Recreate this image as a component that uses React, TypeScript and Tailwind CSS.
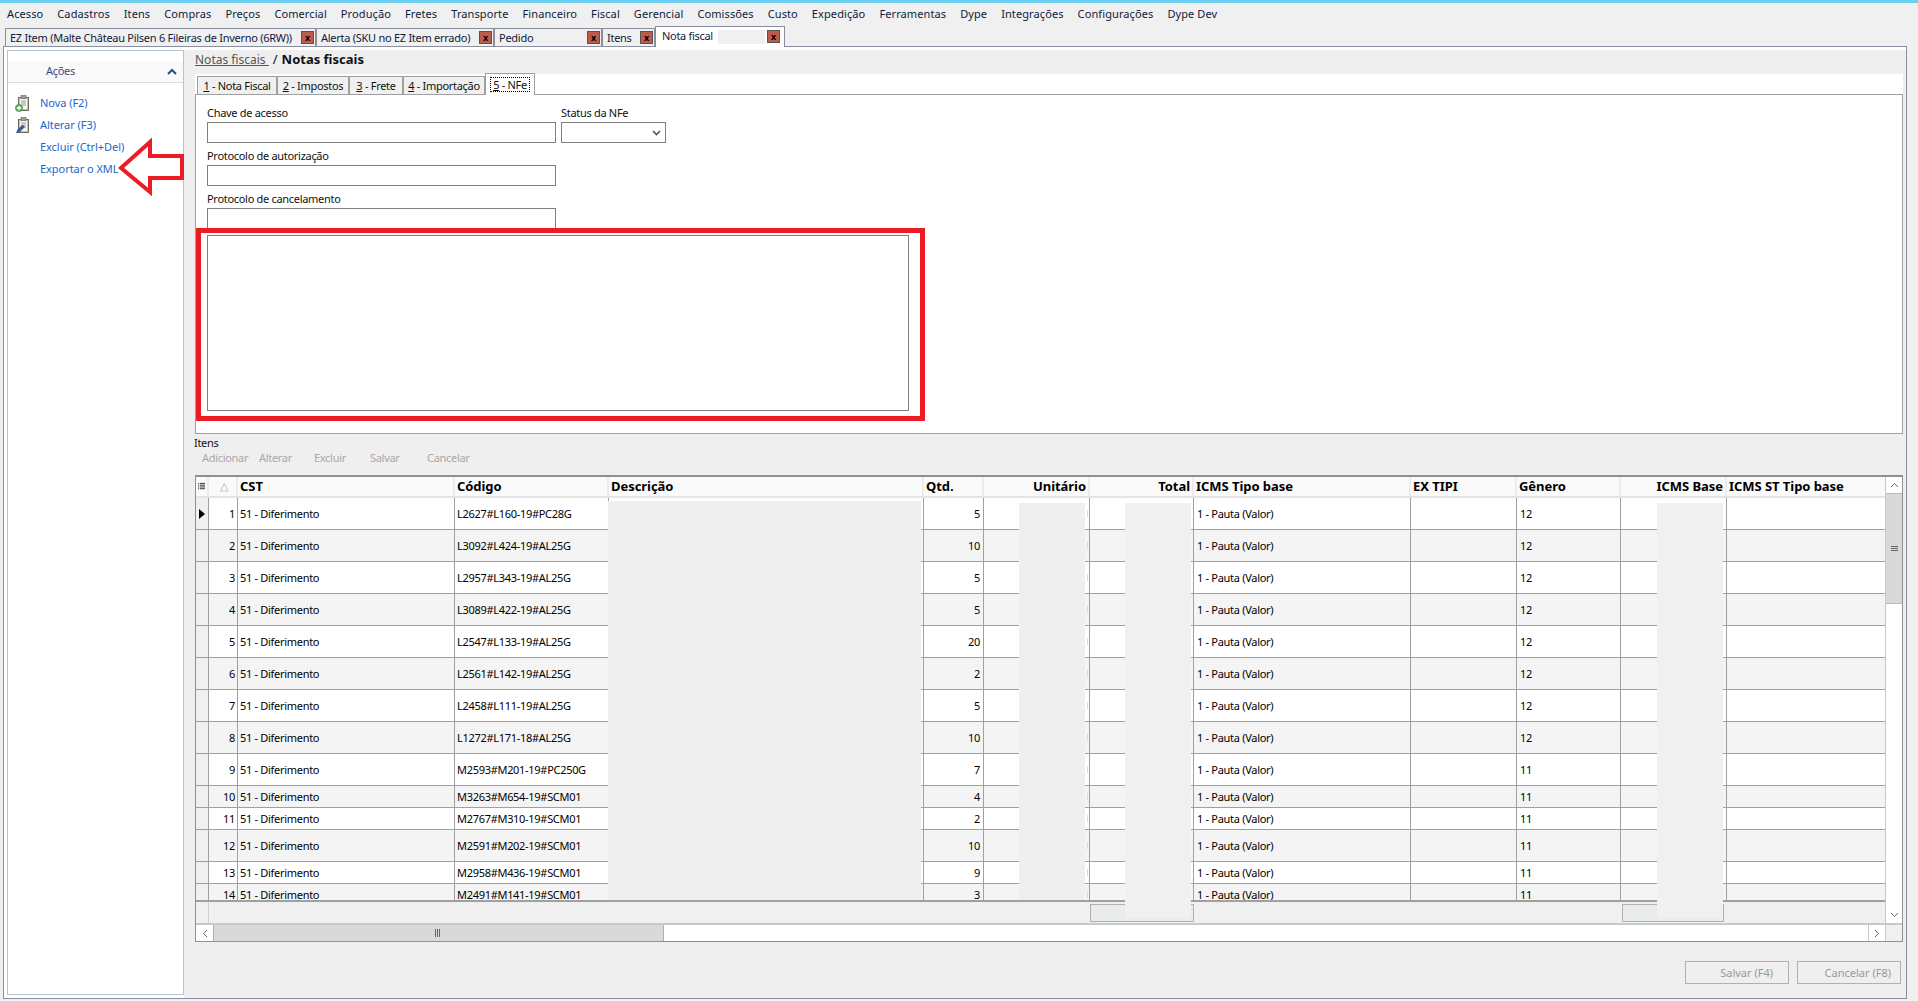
import React from "react";

const menus = ["Acesso","Cadastros","Itens","Compras","Preços","Comercial","Produção","Fretes","Transporte","Financeiro","Fiscal","Gerencial","Comissões","Custo","Expedição","Ferramentas","Dype","Integrações","Configurações","Dype Dev"];

const cols = [
  { t: "", w: 13 },
  { t: "△", w: 29 },
  { t: "CST", w: 217 },
  { t: "Código", w: 154 },
  { t: "Descrição", w: 315 },
  { t: "Qtd.", w: 60 },
  { t: "Unitário", w: 106, r: true },
  { t: "Total", w: 104, r: true },
  { t: "ICMS Tipo base", w: 217 },
  { t: "EX TIPI", w: 106 },
  { t: "Gênero", w: 104 },
  { t: "ICMS Base", w: 106, r: true },
  { t: "ICMS ST Tipo base", w: 160 },
];

const rows = [
  ["L2627#L160-19#PC28G", 5, 12, 32],
  ["L3092#L424-19#AL25G", 10, 12, 32],
  ["L2957#L343-19#AL25G", 5, 12, 32],
  ["L3089#L422-19#AL25G", 5, 12, 32],
  ["L2547#L133-19#AL25G", 20, 12, 32],
  ["L2561#L142-19#AL25G", 2, 12, 32],
  ["L2458#L111-19#AL25G", 5, 12, 32],
  ["L1272#L171-18#AL25G", 10, 12, 32],
  ["M2593#M201-19#PC250G", 7, 11, 32],
  ["M3263#M654-19#SCM01", 4, 11, 22],
  ["M2767#M310-19#SCM01", 2, 11, 22],
  ["M2591#M202-19#SCM01", 10, 11, 32],
  ["M2958#M436-19#SCM01", 9, 11, 22],
  ["M2491#M141-19#SCM01", 3, 11, 22],
] as const;

function Clip({ kind }: { kind: "add" | "edit" }) {
  return (
    <svg width="15" height="17" viewBox="0 0 15 17" className="shrink-0">
      <rect x="3.5" y="2.5" width="10" height="13" fill="#c9c2ae" stroke="#6f6a5c" />
      <rect x="5" y="4" width="7" height="10" fill="#f4f4f0" />
      <rect x="6" y="0.5" width="5" height="3" fill="#9a9a9a" stroke="#666" strokeWidth="0.6" />
      <path d="M6 6h5M6 8h5M6 10h5" stroke="#8a8a8a" strokeWidth="0.8" />
      {kind === "add" ? (
        <g>
          <circle cx="4" cy="13" r="3.6" fill="#5fae5a" stroke="#3d7f3c" strokeWidth="0.6" />
          <path d="M4 10.8v4.4M1.8 13h4.4" stroke="#fff" strokeWidth="1.3" />
        </g>
      ) : (
        <path d="M1.5 16l1-3 5-5 2 2-5 5z" fill="#2d5fa8" stroke="#1d3f78" strokeWidth="0.5" />
      )}
    </svg>
  );
}

function CloseBox() {
  return (
    <span className="w-[13px] h-[13px] shrink-0 bg-[#bd5a4c] border border-[#555] flex items-center justify-center text-[9px] font-bold leading-none text-black">x</span>
  );
}

function Tab({ label, w }: { label: string; w: number }) {
  return (
    <div style={{ width: w }} className="h-[18px] bg-[#f0f0f0] border border-b-0 border-[#8a8fa0] flex items-center justify-between pl-[4px] pr-[1px] whitespace-nowrap overflow-hidden text-[#0f1a3c]">
      <span className="pt-[2px] tracking-[-0.27px]">{label}</span>
      <CloseBox />
    </div>
  );
}

function SubTab({ n, label, w, active }: { n: string; label: string; w: number; active?: boolean }) {
  return (
    <div style={{ width: w }} className={active ? "h-[22px] bg-white border border-b-0 border-[#a0a0a0] flex items-center justify-center relative z-10 -mb-px pb-[1px]" : "h-[18px] bg-[#f0f0f0] border border-b-0 border-[#a0a0a0] flex items-center justify-center"}>
      <span className={active ? "outline outline-1 outline-dotted outline-black px-[2px] leading-[13px]" : "leading-[13px]"}>
        <span className="underline">{n}</span> - {label}
      </span>
    </div>
  );
}

const cellText = "shrink-0 border-r border-[#a0a0a0] flex items-center pt-[2px]";

export default function App() {
  return (
    <div className="relative h-[1001px] w-full bg-[#f0f0f0] overflow-hidden flex flex-col text-[11px] tracking-[-0.3px] text-[#111] font-['Noto_Sans',sans-serif]">
      <div className="h-[3px] bg-[#6dcff0] shrink-0" />
      <div className="h-[23px] shrink-0 flex items-center pl-[7px] gap-[14px] whitespace-nowrap tracking-[0.1px] text-[#0f1a3c]">
        {menus.map((m) => <span key={m}>{m}</span>)}
      </div>
      <div className="h-[20px] shrink-0 flex items-end pl-[5px] relative z-10">
        <Tab label="EZ Item (Malte Château Pilsen 6 Fileiras de Inverno (6RW))" w={311} />
        <Tab label="Alerta (SKU no EZ Item errado)" w={178} />
        <Tab label="Pedido" w={108} />
        <Tab label="Itens" w={53} />
        <div className="w-[130px] h-[21px] -mb-px bg-white border border-b-0 border-[#8a8fa0] flex items-center pl-[6px] pr-[4px] pb-[1px] justify-between text-[#0f1a3c]">
          <span className="flex items-center gap-[5px]"><span>Nota fiscal</span><span className="w-[47px] h-[14px] bg-[#f0f0f0]" /></span>
          <CloseBox />
        </div>
      </div>
      <div className="h-[953px] shrink-0 ml-[3px] mr-[11px] flex bg-white border border-[#8a8fa0] pt-[3px]">
        <aside className="ml-[3px] w-[177px] bg-white border border-[#b4c4d4] shrink-0 mb-[3px]">
          <div className="mt-[10px] h-[22px] bg-[#f9f9f9] border-b border-[#dcdcdc] flex items-center justify-between pl-[38px] pr-[6px]">
            <span className="text-[#3a4a80]">Ações</span>
            <svg width="10" height="7" viewBox="0 0 10 7"><path d="M1 6l4-4 4 4" fill="none" stroke="#1f4f8f" strokeWidth="2" /></svg>
          </div>
          <div className="mt-[9px] flex flex-col text-[#1a66cc] tracking-[-0.05px]">
            {[["Nova (F2)", "add"], ["Alterar (F3)", "edit"], ["Excluir (Ctrl+Del)", ""], ["Exportar o XML", ""]].map(([t, k]) => (
              <div key={t} className="h-[22px] flex items-center pl-[7px] gap-[10px]">
                <span className="w-[15px] flex">{k ? <Clip kind={k as "add" | "edit"} /> : null}</span>
                <span>{t}</span>
              </div>
            ))}
          </div>
        </aside>
        <main className="flex-1 min-w-0 pl-[11px] pr-[3px] bg-[#efefef]">
          <div className="h-[24px] pb-[4px] flex items-center gap-[4px] tracking-normal">
            <span className="underline text-[12px] text-[#555] whitespace-pre">Notas fiscais </span>
            <span className="text-[13px]">/</span>
            <span className="font-bold text-[13px]">Notas fiscais</span>
          </div>
          <section className="bg-white">
            <div className="h-[20px] flex items-end pl-[2px]">
              <SubTab n="1" label="Nota Fiscal" w={80} />
              <SubTab n="2" label="Impostos" w={72} />
              <SubTab n="3" label="Frete" w={54} />
              <SubTab n="4" label="Importação" w={82} />
              <SubTab n="5" label="NFe" w={50} active />
            </div>
            <div className="h-[340px] border border-[#a0a0a0] pt-[10px]">
              <div className="pl-[11px] flex gap-[5px]">
                <div>
                  <div className="h-[17px] leading-[15px]">Chave de acesso</div>
                  <div className="w-[349px] h-[21px] bg-white border border-[#808080]" />
                </div>
                <div>
                  <div className="h-[17px] leading-[15px]">Status da NFe</div>
                  <div className="w-[105px] h-[21px] bg-white border border-[#808080] flex items-center justify-end pr-[4px]">
                    <svg width="9" height="6" viewBox="0 0 9 6"><path d="M1 1l3.5 3.5L8 1" fill="none" stroke="#555" strokeWidth="1.6" /></svg>
                  </div>
                </div>
              </div>
              <div className="pl-[11px] mt-[5px]">
                <div className="h-[17px] leading-[15px]">Protocolo de autorização</div>
                <div className="w-[349px] h-[21px] bg-white border border-[#808080]" />
              </div>
              <div className="pl-[11px] mt-[5px]">
                <div className="h-[17px] leading-[15px]">Protocolo de cancelamento</div>
                <div className="w-[349px] h-[20px] bg-white border border-b-0 border-[#808080]" />
              </div>
              <div className="w-[729px] h-[193px] border-[5px] border-[#ed1c24] pl-[6px] pr-[11px] pt-[2px] pb-[5px] flex">
                <div className="flex-1 bg-white border border-[#808080]" />
              </div>
            </div>
          </section>
          <div className="h-[15px] leading-[15px] mt-[1px] -ml-[1px]">Itens</div>
          <div className="h-[16px] flex items-center pl-[7px] text-[#a8a8a8]">
            <span className="w-[57px]">Adicionar</span>
            <span className="w-[55px]">Alterar</span>
            <span className="w-[56px]">Excluir</span>
            <span className="w-[57px]">Salvar</span>
            <span>Cancelar</span>
          </div>
          <div className="mt-[9px] h-[467px] border border-[#909090] border-t-2 flex bg-[#f0f0f0] overflow-hidden">
            <div className="flex-1 min-w-0 flex flex-col">
              <div className="flex-1 min-h-0 flex">
                <div className="flex-1 min-w-0 flex flex-col relative overflow-hidden">
                  <div className="h-[21px] shrink-0 flex bg-[#fafafa] border-b-2 border-[#e4e4e4] font-bold text-[13px] tracking-[-0.05px] text-black whitespace-nowrap">
                    {cols.map((c, i) => (
                      <div key={i} style={{ width: c.w }} className={`shrink-0 flex items-center px-[2px] border-r-2 border-[#ececec] overflow-hidden ${c.r ? "justify-end" : ""} ${i === 1 ? "justify-end pr-[8px] font-normal text-[#aaa] text-[11px]" : ""}`}>
                        {i === 0 ? (
                          <svg width="8" height="9" viewBox="0 0 8 9"><path d="M0 1h1M2 1h6M0 3h1M2 3h6M0 5h1M2 5h6M0 7h1M2 7h6" stroke="#222" strokeWidth="1" /></svg>
                        ) : c.t}
                      </div>
                    ))}
                  </div>
                  <div className="flex-1 min-h-0 overflow-hidden text-black">
                    {rows.map((r, i) => (
                      <div key={i} style={{ height: r[3] }} className={`flex whitespace-nowrap border-b border-[#a0a0a0] box-border ${i % 2 ? "bg-[#f4f4f4]" : "bg-white"}`}>
                        <div className="w-[13px] shrink-0 bg-[#f0f0f0] border-r border-[#a0a0a0] flex items-center justify-center">
                          {i === 0 ? <svg width="6" height="10" viewBox="0 0 6 10"><path d="M0 0l6 5-6 5z" fill="#000" /></svg> : null}
                        </div>
                        <div className={`w-[29px] justify-end pr-[2px] ${cellText}`}>{i + 1}</div>
                        <div className={`w-[217px] pl-[2px] ${cellText}`}>51 - Diferimento</div>
                        <div className={`w-[154px] pl-[2px] ${cellText}`}>{r[0]}</div>
                        <div className="w-[315px] shrink-0 border-r border-[#a0a0a0] flex items-center">
                          <span className="w-px h-[10px] bg-[#f5d9a8]" />
                        </div>
                        <div className={`w-[60px] justify-end pr-[3px] ${cellText}`}>{r[1]}</div>
                        <div className="w-[106px] shrink-0 border-r border-[#a0a0a0] flex items-center justify-end pr-[1px]">
                          <span className="w-px h-[7px] bg-[#bfe3f2]" />
                        </div>
                        <div className="w-[104px] shrink-0 border-r border-[#a0a0a0]" />
                        <div className={`w-[217px] pl-[3px] ${cellText}`}>1 - Pauta (Valor)</div>
                        <div className="w-[106px] shrink-0 border-r border-[#a0a0a0]" />
                        <div className={`w-[104px] pl-[3px] ${cellText}`}>{r[2]}</div>
                        <div className="w-[106px] shrink-0 border-r border-[#a0a0a0]" />
                        <div className="w-[160px] shrink-0" />
                      </div>
                    ))}
                  </div>
                  <div className="h-[23px] shrink-0 border-t-2 border-[#a0a0a0] bg-[#f0f0f0] flex">
                    <div className="w-[13px] border-r border-[#d0d0d0]" />
                    <div className="ml-[881px] mt-[2px] w-[104px] h-[18px] border border-[#b0b0b0] bg-[#e8ecec]" />
                    <div className="ml-[428px] mt-[2px] w-[102px] h-[18px] border border-[#b0b0b0] bg-[#e8ecec]" />
                  </div>
                  <div className="absolute left-[412px] top-[24px] w-[313px] bottom-[23px] bg-[#efefef]" />
                  <div className="absolute left-[823px] top-[26px] w-[66px] bottom-[23px] bg-[#efefef]" />
                  <div className="absolute left-[929px] top-[26px] w-[66px] bottom-[4px] bg-[#f0f0f0]" />
                  <div className="absolute left-[1461px] top-[26px] w-[66px] bottom-[4px] bg-[#f0f0f0]" />
                </div>
                <div className="w-[17px] shrink-0 bg-white border-l border-[#c8c8c8] flex flex-col">
                  <div className="h-[16px] flex items-center justify-center">
                    <svg width="9" height="6" viewBox="0 0 9 6"><path d="M1 5l3.5-3.5L8 5" fill="none" stroke="#666" /></svg>
                  </div>
                  <div className="h-[111px] bg-[#d9d9d9] border-y border-[#b8b8b8] flex items-center justify-center">
                    <svg width="7" height="6" viewBox="0 0 7 6"><path d="M0 .5h7M0 2.5h7M0 4.5h7" stroke="#666" /></svg>
                  </div>
                  <div className="flex-1" />
                  <div className="h-[17px] flex items-center justify-center">
                    <svg width="9" height="6" viewBox="0 0 9 6"><path d="M1 1l3.5 3.5L8 1" fill="none" stroke="#666" /></svg>
                  </div>
                </div>
              </div>
              <div className="h-[18px] shrink-0 flex bg-white border-t-2 border-[#c8c8c8]">
                <div className="w-[17px] flex items-center justify-center bg-white">
                  <svg width="6" height="9" viewBox="0 0 6 9"><path d="M5 1L1.5 4.5 5 8" fill="none" stroke="#666" /></svg>
                </div>
                <div className="w-[451px] bg-[#d9d9d9] border-x border-[#b0b0b0] flex items-center justify-center">
                  <svg width="7" height="8" viewBox="0 0 7 8"><path d="M.5 0v8M2.5 0v8M4.5 0v8" stroke="#666" /></svg>
                </div>
                <div className="flex-1" />
                <div className="w-[17px] border-l border-[#c8c8c8] flex items-center justify-center">
                  <svg width="6" height="9" viewBox="0 0 6 9"><path d="M1 1l3.5 3.5L1 8" fill="none" stroke="#666" /></svg>
                </div>
                <div className="w-[17px] bg-[#f0f0f0] border-l border-[#c8c8c8]" />
              </div>
            </div>
          </div>
          <div className="mt-[19px] flex justify-end gap-[8px] pr-[2px] text-[#999] tracking-normal">
            <div className="w-[104px] h-[23px] pt-[1px] border border-[#b0b0b0] flex items-center justify-end pr-[15px]">Salvar (F4)</div>
            <div className="w-[104px] h-[23px] pt-[1px] border border-[#b0b0b0] flex items-center justify-end pr-[9px]">Cancelar (F8)</div>
          </div>
        </main>
      </div>
      <svg className="absolute left-[116px] top-[137px]" width="70" height="60" viewBox="0 0 70 60">
        <path d="M5 31L34 5v14h32v22H34v14z" fill="#fff" stroke="#ed1c24" strokeWidth="4" />
      </svg>
    </div>
  );
}
